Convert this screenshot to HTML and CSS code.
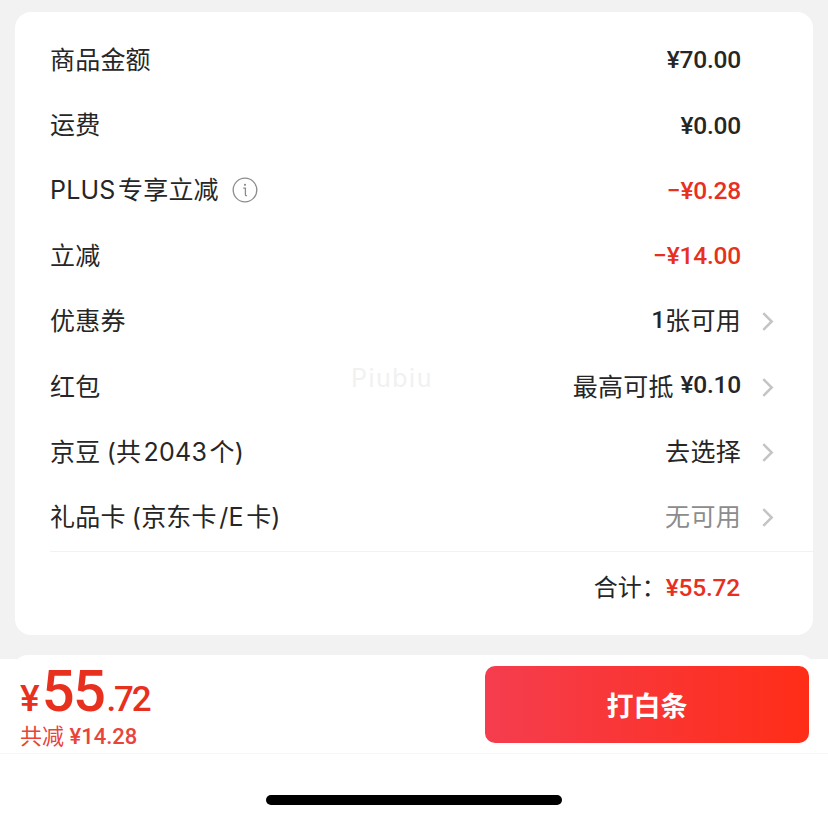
FILE: index.html
```html
<!DOCTYPE html>
<html lang="zh-CN">
<head>
<meta charset="utf-8">
<title>订单结算</title>
<link rel="stylesheet" href="styles.css">
</head>
<body>
<main class="page">
  <section class="card">
    <div class="row"><span class="label">商品金额</span><span class="amount">¥70.00</span></div>
    <div class="row"><span class="label">运费</span><span class="amount">¥0.00</span></div>
    <div class="row">
      <span class="label"><span>PLUS&#8202;专享立减</span><svg class="info" viewBox="0 0 26 26" aria-hidden="true"><circle cx="13" cy="13" r="11.8" fill="none" stroke="#8c8c8c" stroke-width="1.3"/><circle cx="13" cy="7.8" r="1.1" fill="#8c8c8c"/><path d="M11.2 11.2h2.2v6.4c0 1 .6 1.3 1.6.9" fill="none" stroke="#8c8c8c" stroke-width="1.3"/></svg></span>
      <span class="amount red">−¥0.28</span>
    </div>
    <div class="row"><span class="label">立减</span><span class="amount red">−¥14.00</span></div>
    <div class="row"><span class="label">优惠券</span><span class="value"><b class="amt-in">1</b>张可用<svg class="chev" viewBox="0 0 12 20" aria-hidden="true"><path d="M2 2l8 8-8 8"/></svg></span></div>
    <div class="row"><span class="label">红包</span><span class="value">最高可抵 <b class="amt-in">¥0.10</b><svg class="chev" viewBox="0 0 12 20" aria-hidden="true"><path d="M2 2l8 8-8 8"/></svg></span></div>
    <div class="row"><span class="label">京豆 (共&#8202;2043&#8202;个)</span><span class="value">去选择<svg class="chev" viewBox="0 0 12 20" aria-hidden="true"><path d="M2 2l8 8-8 8"/></svg></span></div>
    <div class="row"><span class="label">礼品卡 (京东卡&#8202;/E&#8202;卡)</span><span class="value muted">无可用<svg class="chev" viewBox="0 0 12 20" aria-hidden="true"><path d="M2 2l8 8-8 8"/></svg></span></div>
    <div class="total"><span class="total-label">合计：</span><span class="amount red">¥55.72</span></div>
    <span class="watermark">Piubiu</span>
  </section>
  <div class="card-next"></div>
  <footer class="footer">
    <div class="bar">
      <div class="price">
        <div class="big"><span class="cur">¥</span><span class="int">55</span><span class="dec">.72</span></div>
        <div class="saved">共减 <b>¥14.28</b></div>
      </div>
      <button class="pay">打白条</button>
    </div>
    <div class="home-area"><span class="home"></span></div>
  </footer>
</main>
</body>
</html>
```
FILE: styles.css
```css
* { box-sizing: border-box; }
html, body { margin: 0; padding: 0; }
body {
  width: 828px;
  height: 820px;
  overflow: hidden;
  background: #f2f2f2;
  font-family: Roboto, "Noto Sans CJK SC", sans-serif;
  color: #262626;
}
.page { display: flex; flex-direction: column; height: 820px; padding-top: 12px; }
.card {
  position: relative;
  margin: 0 15px;
  height: 623px;
  padding: 15px 0 0 35px;
  background: #fff;
  border-radius: 16px;
}
.row {
  display: flex;
  justify-content: space-between;
  align-items: center;
  height: 65.4px;
  padding-right: 72px;
  font-size: 25px;
}
.label {
  display: flex;
  align-items: center;
  padding-bottom: 4px;
  font-family: Inter, "Noto Sans CJK SC", sans-serif;
  letter-spacing: 0.2px;
  word-spacing: -1px;
  white-space: pre;
}
.info { width: 26px; height: 26px; margin: 4px 0 0 13px; }
.amount { font-weight: 500; font-size: 24.5px; letter-spacing: -0.2px; color: #262626; }
.red { color: #e8301f; }
.value {
  position: relative;
  display: flex;
  align-items: center;
  padding-bottom: 4px;
  letter-spacing: 0.3px;
  white-space: pre;
}
.amt-in { font-size: 24.5px; font-weight: 500; letter-spacing: -0.2px; }
.muted { color: #8c8c8c; }
.chev {
  position: absolute;
  left: calc(100% + 20px);
  top: 50%;
  width: 13px;
  height: 21px;
  margin-top: -10px;
  fill: none;
  stroke: #c4c4c4;
  stroke-width: 2.4;
}
.total {
  display: flex;
  justify-content: flex-end;
  align-items: center;
  height: 72px;
  margin-top: 1px;
  padding-right: 73px;
  border-top: 1px solid #f2f2f2;
  font-size: 24px;
}
.total-label { padding-bottom: 5px; }
.watermark {
  position: absolute;
  left: 336px;
  top: 351px;
  font-family: Inter, sans-serif;
  font-size: 25px;
  letter-spacing: 1.5px;
  color: #f1f1f1;
}
.card-next {
  flex: none;
  margin: 20px 15px 0;
  height: 12px;
  margin-bottom: -8px;
  background: #fff;
  border-radius: 16px 16px 0 0;
}
.footer { position: relative; flex: 1; background: #fff; }
.bar {
  display: flex;
  justify-content: space-between;
  height: 95px;
  padding: 7px 19px 0 20px;
  border-bottom: 1px solid #f6f6f6;
}
.price { color: #e8301f; }
.big { display: flex; align-items: baseline; height: 56px; font-weight: 500; line-height: 50px; }
.cur { font-size: 37px; }
.int { font-size: 58px; margin-left: 2px; letter-spacing: -1.5px; }
.dec { font-size: 35px; letter-spacing: -2.2px; margin-left: 2px; }
.saved { font-size: 22px; line-height: 30px; color: #e8443a; white-space: pre; }
.saved b { font-weight: 500; }
.pay {
  width: 324px;
  height: 77px;
  border: 0;
  border-radius: 10px;
  background: linear-gradient(90deg, #f53d4f, #ff2d17);
  color: #fff;
  font-family: "Noto Sans CJK SC", sans-serif;
  font-size: 27px;
  font-weight: 700;
}
.home-area { display: flex; justify-content: center; padding: 41px 0 0 0; }
.home { display: block; width: 296px; height: 10px; border-radius: 5px; background: #000; }
```
